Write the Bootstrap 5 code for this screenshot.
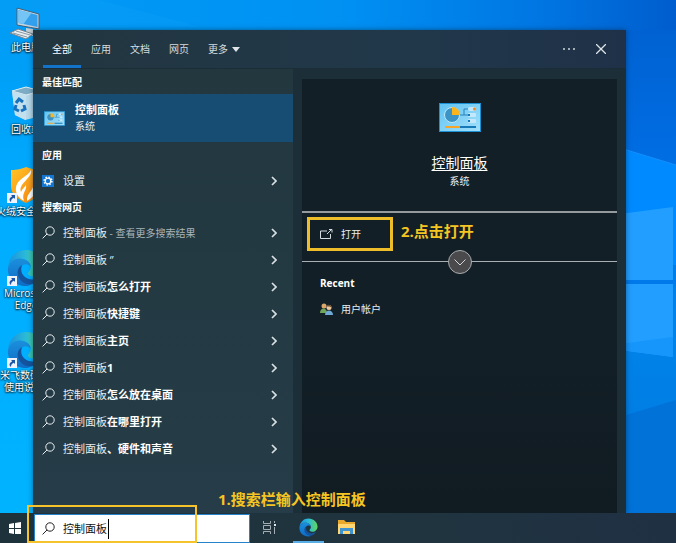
<!DOCTYPE html>
<html lang="zh-CN">
<head>
<meta charset="utf-8">
<meta name="viewport" content="width=device-width, initial-scale=1">
<title>控制面板</title>
<link href="https://cdn.jsdelivr.net/npm/bootstrap@5.3.0/dist/css/bootstrap.min.css" rel="stylesheet">
<style>
  body { font-family: "Open Sans", "Noto Sans CJK SC", sans-serif; font-size: 11px; line-height: 16px; background: #0091f2; color: #e8edf0; }
  button { font: inherit; color: inherit; background: none; border: 0; padding: 0; }
  svg { display: block; flex: none; }
  .fs-s { font-size: 10px; }
  .desk-list { width: 52px; padding-top: 3px; }
  .desk-item { height: 82px; color: #fff; font-size: 10px; line-height: 12px; text-decoration: none; text-shadow: 0 1px 2px #000, 0 0 2px #000; white-space: nowrap; }
  .desk-item svg { height: 38px; }
  .search-panel { left: 33px; right: 50px; top: 30px; bottom: 0; background: #1c2e38; box-shadow: 0 0 5px #0238; }
  .panel-head { height: 39px; background: linear-gradient(90deg, #22363f, #21384a 60%, #1f3148); border-bottom: 1px solid #1b2d36; padding-left: 10px; padding-right: 13px; }
  .tabs { gap: 1px; }
  .tab { padding: 0 9px; border-bottom: 3px solid transparent; border-top: 3px solid transparent; color: #d5dcdf; }
  .tab.active { border-bottom-color: #1273c8; color: #fff; }
  .head-btn { width: 24px; height: 24px; }
  .results { width: 260px; background: linear-gradient(#23373f, #233a43 50%, #263c48); }
  .group-label { font-size: 10px; font-weight: 700; height: 25px; padding-left: 9px; color: #fff; margin: 0; }
  .best { height: 48px; background: #184d73; padding-left: 11px; gap: 10px; }
  .best b, .hit b { color: #fff; }
  .hit { height: 27px; padding-left: 9px; padding-right: 16px; gap: 8px; }
  .hit small { font-size: 10px; color: #aab5ba; }
  .preview { margin: 10px 9px 0; background: linear-gradient(#121f27, #131f26 60%, #101b22); }
  .hero { padding-top: 24px; height: 132px; }
  .hero a { color: #fff; font-size: 14px; line-height: 20px; margin-top: 21px; text-underline-offset: 2px; }
  .actions { border-top: 2px solid #949a9e; border-bottom: 1px solid #a9afb2; height: 51px; padding: 4px 5px 0; gap: 8px; }
  .open-btn { width: 86px; height: 34px; border: 3px solid #eebd2a; padding-left: 10px; gap: 8px; }
  .note { color: #f5c522; font-size: 15px; line-height: 20px; font-weight: 700; }
  .expand { width: 24px; height: 24px; left: calc(50% - 12px); bottom: -13px; background: #4a4a4c; border: 1px solid #a8abad; border-radius: 50%; }
  .recent { padding: 13px 18px; gap: 10px; }
  .note-one { left: 218px; bottom: 4px; }
  .taskbar { height: 30px; background: linear-gradient(90deg, #1e323b, #20343f 60%, #1f3043); }
  .start-btn { width: 34px; padding-left: 9px; }
  .search-box { width: 216px; background: #fff; border: 1px solid #2583cc; margin-top: 1px; padding-left: 7px; gap: 8px; color: #222; }
  .search-box input { font-size: 11px; line-height: 16px; border: 0; outline: 0; padding: 0; color: #111; min-width: 0; }
  .text-caret { left: 73px; top: 4px; width: 1px; height: 20px; background: #000; }
  .task-btn { width: 38px; border-bottom: 2px solid transparent !important; }
  .task-btn.running { border-bottom-color: #5aaee8 !important; width: 31px; margin-left: 5px; margin-right: 3px; }
  .frame-one { left: 27px; top: -8px; width: 170px; height: 38px; border: 2px solid #f5c42c; pointer-events: none; }
</style>
<script src="https://cdn.jsdelivr.net/npm/bootstrap@5.3.0/dist/js/bootstrap.bundle.min.js"></script>
</head>
<body class="vh-100 d-flex flex-column overflow-hidden">

<svg width="0" height="0" class="position-absolute" aria-hidden="true">
  <defs>
    <linearGradient id="eg1" x1="0" y1="0" x2="1" y2="0"><stop offset="0" stop-color="#1b8fdc"/><stop offset=".5" stop-color="#2bbbd8"/><stop offset="1" stop-color="#62d95a"/></linearGradient>
    <linearGradient id="eg2" x1="0" y1="0" x2="0" y2="1"><stop offset="0" stop-color="#1b8fdc"/><stop offset="1" stop-color="#0f6cc4"/></linearGradient>
    <linearGradient id="cp" x1="0" y1="0" x2="1" y2="1"><stop offset="0" stop-color="#5ec3f2"/><stop offset="1" stop-color="#a4e0fb"/></linearGradient>
    <linearGradient id="shield" x1="0" y1="0" x2="1" y2="1"><stop offset="0" stop-color="#ffc629"/><stop offset="1" stop-color="#f57c0d"/></linearGradient>
    <symbol id="edge" viewBox="0 0 40 40">
      <path d="M1 20C2 8 10 1 20 1c11 0 19 8 19 17 0 7-5 11-11 11-4 0-6-2-6-3 0-2 3-3 3-7 0-5-5-9-12-9C7 10 3 14 1 20z" fill="url(#eg1)"/>
      <path d="M1 20C3 14 7 10 13 10c7 0 12 4 12 9-1-2-3-3-5-3-5 0-8 5-7 10 1 7 7 11 13 11-2 1-4 2-6 2C9 39 0 31 1 20z" fill="url(#eg2)"/>
      <path d="M16 17c-4 2-6 6-4 12 2 5 7 9 14 8 4-1 8-4 10-8-3 2-6 3-9 3-7 0-12-5-12-10 0-2 0-3 1-5z" fill="#14539d"/>
    </symbol>
    <symbol id="cpl" viewBox="0 0 42 29">
      <rect x=".5" y=".5" width="41" height="28" fill="url(#cp)" stroke="#1c91d6"/>
      <circle cx="13" cy="12" r="7.5" fill="#3b93c6" stroke="#bfe8fa"/>
      <path d="M13 12V4a8 8 0 0 1 8 8z" fill="#fbb41c"/>
      <path d="M21 12h4V6h4M25 12h4" fill="none" stroke="#2b82b7"/>
      <g fill="#c3e8fb"><rect x="29" y="4" width="8" height="4" rx="2"/><rect x="29" y="10" width="8" height="4" rx="1"/><rect x="29" y="16" width="8" height="4" rx="1"/></g>
      <g fill="#1679b8"><rect x="29" y="11" width="2" height="2"/><rect x="29" y="17" width="2" height="2"/><rect x="21" y="23" width="16" height="2"/></g>
      <circle cx="35.500" cy="6" r="1.5" fill="#f18a25"/><path d="M6 23h15v2H6z" fill="#f7a62b"/>
    </symbol>
    <symbol id="glass" viewBox="0 0 13 13"><g fill="none" stroke="currentColor"><circle cx="8" cy="5" r="4.200"/><path d="M5 8 .6 12.400"/></g></symbol>
    <symbol id="chev" viewBox="0 0 6 10"><path d="m1 1 4 4-4 4" fill="none" stroke="#d9e0e3" stroke-width="1.700"/></symbol>
    <symbol id="short" viewBox="0 0 10 10"><path d="M0 0h10v10H0z" fill="#eef2fb"/><path d="M4 2h4v4L6.800 4.800C5 5.500 4 7 4 9 1.500 7 2.500 4.800 5.200 3.200z" fill="#1c55a8"/></symbol>
  </defs>
</svg>

<main class="position-relative flex-fill overflow-hidden">
  <svg class="position-absolute w-100 h-100" viewBox="0 0 676 513" preserveAspectRatio="none" aria-hidden="true">
    <defs>
      <linearGradient id="sky" x1="0" y1="0" x2="1" y2="0"><stop offset="0" stop-color="#009cf5"/><stop offset=".5" stop-color="#0091f3"/><stop offset=".8" stop-color="#0076e3"/><stop offset="1" stop-color="#005dcd"/></linearGradient>
      <linearGradient id="lft" x1="0" y1="0" x2="0" y2="1"><stop offset="0" stop-color="#009cf5"/><stop offset=".4" stop-color="#00adff"/><stop offset="1" stop-color="#00b3ff"/></linearGradient>
      <linearGradient id="rgt" x1="0" y1="0" x2="0" y2="1"><stop offset="0" stop-color="#0062d2"/><stop offset=".28" stop-color="#006ee4"/><stop offset=".6" stop-color="#0084ec"/><stop offset="1" stop-color="#0078dc"/></linearGradient>
    </defs>
    <path d="M0 0h676v513H0z" fill="url(#sky)"/>
    <path d="M0 30h34v483H0z" fill="url(#lft)"/>
    <path d="M100 0 200 27H0V0z" fill="#13a5fa" opacity=".2"/>
    <path d="M620 30h56v483h-56z" fill="url(#rgt)"/>
    <path d="m620 148 56 17v100h-56z" fill="#008aff"/>
    <path d="m620 148 56 17" stroke="#1390fb"/>
    <path d="m620 214 53-7v73h-53zM620 284h53v73l-53-7z" fill="#219eff"/>
    <path d="M620 280h56v4h-56z" fill="#0079eb"/>
    <path d="m620 344 53-7v20l-53-7z" fill="#1696fb"/>
    <path d="m620 417 56-17v113h-56z" fill="#0072d8"/>
  </svg>

  <nav class="desk-list position-absolute top-0 start-0 d-flex flex-column" aria-label="桌面">
    <a href="#" class="desk-item d-flex flex-column align-items-center">
      <svg width="34" viewBox="0 0 34 38"><path d="m8 5 22 6v15L8 22z" fill="#c6d6e1" stroke="#425f78"/><path d="m9.500 7 19 5v12l-19-4z" fill="#32a0ec"/><path d="m9.500 7 13 3-8 11-5-1z" fill="#74c4f6"/><path d="m17 25 7 1v3l5 2-5 2-10-3 3-1z" fill="#c5ced4"/><path d="m1 30 8-4 15 5-7 5z" fill="#e9eef1" stroke="#74838f"/><path d="m4 30 14 4M7 28l14 4" stroke="#8797a3"/></svg>
      <span>此电脑</span></a>
    <a href="#" class="desk-item d-flex flex-column align-items-center">
      <svg width="31" viewBox="0 0 31 38"><path d="m1 6 14-4 15 4-4 26-12 3-10-5z" fill="#b8d9e9"/><path d="m1 6 14-4 15 4-15 4z" fill="#7facc5" stroke="#dceef6"/><path d="m15 10v25L4 30 1 6z" fill="#c3e0ee"/><g fill="none" stroke="#1672bd" stroke-width="3"><path d="m5 18 3-4 4 3M13 20l1 4-4 2M8 26l-4-2 1-4"/></g></svg>
      <span>回收站</span></a>
    <a href="#" class="desk-item d-flex flex-column align-items-center">
      <svg width="38" viewBox="0 0 38 38"><path d="M4 3c7 0 10-1 15-3 5 2 10 3 15 3v16c0 8-6 13-15 17C10 32 4 27 4 19z" fill="url(#shield)"/><path d="M24 3c2 8-13 13-10 22 1-3 3-4 5-7 1 6-5 8-2 16-7-4-10-10-7-17 3-6 11-8 14-14zM28 12c4 9 2 16-8 22-1-8 8-11 8-22z" fill="#fff"/><use href="#short" y="26" width="10" height="10"/></svg>
      <span>火绒安全软件</span></a>
    <a href="#" class="desk-item d-flex flex-column align-items-center">
      <svg width="38" viewBox="0 0 38 38"><use href="#edge" width="38" height="38"/><use href="#short" y="27" width="10" height="10"/></svg>
      <span>Microsoft</span><span>Edge</span></a>
    <a href="#" class="desk-item d-flex flex-column align-items-center">
      <svg width="38" viewBox="0 0 38 38"><use href="#edge" width="38" height="38"/><use href="#short" y="27" width="10" height="10"/></svg>
      <span class="align-self-start">米飞数码</span><span class="align-self-start ps-1">使用说明</span></a>
  </nav>

  <section class="search-panel position-absolute d-flex flex-column">
    <header class="panel-head d-flex fs-s">
      <div class="tabs d-flex flex-fill">
        <button class="tab active">全部</button><button class="tab">应用</button><button class="tab">文档</button><button class="tab">网页</button>
        <button class="tab d-flex align-items-center gap-1">更多<svg width="8" height="5" viewBox="0 0 8 5"><path d="M0 0h8L4 5z" fill="#dfe5e8"/></svg></button>
      </div>
      <div class="d-flex align-items-center gap-2">
        <button class="head-btn d-flex align-items-center justify-content-center" aria-label="选项"><svg width="12" height="2"><path d="M0 0h2v2H0zM5 0h2v2H5zM10 0h2v2h-2z" fill="#a3adb5"/></svg></button>
        <button class="head-btn d-flex align-items-center justify-content-center" aria-label="关闭"><svg width="10" height="10"><path d="m0 0 10 10M10 0 0 10" stroke="#dde3e7" stroke-width="1.300"/></svg></button>
      </div>
    </header>

    <div class="d-flex flex-fill">
      <div class="results d-flex flex-column flex-shrink-0">
        <h2 class="group-label d-flex align-items-center">最佳匹配</h2>
        <button class="best d-flex align-items-center text-start"><svg width="21" height="15"><use href="#cpl"/></svg><span class="d-flex flex-column"><b>控制面板</b><span class="fs-s">系统</span></span></button>
        <h2 class="group-label d-flex align-items-center">应用</h2>
        <button class="hit d-flex align-items-center text-start"><svg width="13" height="12" viewBox="0 0 13 12"><path d="M0 0h12v12H0z" fill="#1376d2"/><circle cx="6" cy="6" r="3.900" fill="none" stroke="#fff" stroke-width="1.500" stroke-dasharray="1.500 1.560"/><circle cx="6" cy="6" r="2.800" fill="none" stroke="#fff" stroke-width="1.200"/></svg><span class="flex-fill">设置</span><svg width="6" height="10"><use href="#chev"/></svg></button>
        <h2 class="group-label d-flex align-items-center">搜索网页</h2>
        <button class="hit d-flex align-items-center text-start"><svg width="13" height="13"><use href="#glass"/></svg><span class="flex-fill">控制面板<small> - 查看更多搜索结果</small></span><svg width="6" height="10"><use href="#chev"/></svg></button>
        <button class="hit d-flex align-items-center text-start"><svg width="13" height="13"><use href="#glass"/></svg><span class="flex-fill">控制面板 ‘’</span><svg width="6" height="10"><use href="#chev"/></svg></button>
        <button class="hit d-flex align-items-center text-start"><svg width="13" height="13"><use href="#glass"/></svg><span class="flex-fill">控制面板<b>怎么打开</b></span><svg width="6" height="10"><use href="#chev"/></svg></button>
        <button class="hit d-flex align-items-center text-start"><svg width="13" height="13"><use href="#glass"/></svg><span class="flex-fill">控制面板<b>快捷键</b></span><svg width="6" height="10"><use href="#chev"/></svg></button>
        <button class="hit d-flex align-items-center text-start"><svg width="13" height="13"><use href="#glass"/></svg><span class="flex-fill">控制面板<b>主页</b></span><svg width="6" height="10"><use href="#chev"/></svg></button>
        <button class="hit d-flex align-items-center text-start"><svg width="13" height="13"><use href="#glass"/></svg><span class="flex-fill">控制面板<b>1</b></span><svg width="6" height="10"><use href="#chev"/></svg></button>
        <button class="hit d-flex align-items-center text-start"><svg width="13" height="13"><use href="#glass"/></svg><span class="flex-fill">控制面板<b>怎么放在桌面</b></span><svg width="6" height="10"><use href="#chev"/></svg></button>
        <button class="hit d-flex align-items-center text-start"><svg width="13" height="13"><use href="#glass"/></svg><span class="flex-fill">控制面板<b>在哪里打开</b></span><svg width="6" height="10"><use href="#chev"/></svg></button>
        <button class="hit d-flex align-items-center text-start"><svg width="13" height="13"><use href="#glass"/></svg><span class="flex-fill">控制面板<b>、硬件和声音</b></span><svg width="6" height="10"><use href="#chev"/></svg></button>
      </div>

      <div class="preview flex-fill">
        <div class="hero d-flex flex-column align-items-center">
          <svg width="42" height="29"><use href="#cpl"/></svg>
          <a href="#">控制面板</a>
          <span class="fs-s">系统</span>
        </div>
        <div class="actions position-relative d-flex align-items-start">
          <button class="open-btn d-flex align-items-center fs-s"><svg width="13" height="10" viewBox="0 0 13 10"><path d="M7 2H.5v7.500h10V5M7 5l4-4M9 .5h3v3" fill="none" stroke="#d5dbde"/></svg>打开</button>
          <span class="note pt-1">2.点击打开</span>
          <button class="expand position-absolute d-flex align-items-center justify-content-center" aria-label="展开"><svg width="12" height="7"><path d="m.5.5 5.500 5.500 5.500-5.500" fill="none" stroke="#d2d4d5"/></svg></button>
        </div>
        <div class="recent d-flex flex-column fs-s">
          <b class="text-white">Recent</b>
          <a href="#" class="d-flex align-items-center gap-2 text-reset text-decoration-none"><svg width="13" height="12"><circle cx="4" cy="3" r="2.500" fill="#dba66b"/><path d="M0 10c0-6 7-6 7 0z" fill="#71a65a"/><circle cx="9" cy="4.500" r="2.500" fill="#efc79c"/><path d="M6.500 3.500c1-3 5-2 5 1l-2-1z" fill="#6b4a2c"/><path d="M5 12c0-6 8-6 8 0z" fill="#6fa9d8"/></svg>用户帐户</a>
        </div>
      </div>
    </div>
  </section>

  <div class="note note-one position-absolute">1.搜索栏输入控制面板</div>
</main>

<footer class="taskbar position-relative d-flex flex-shrink-0">
  <button class="start-btn d-flex align-items-center" aria-label="开始"><svg width="12" height="12"><path d="m0 2 5-1v5H0zM6 1l6-1v6H6zM0 7h5v5l-5-1zM6 7h6v5H6z" fill="#fff"/></svg></button>
  <label class="search-box position-relative d-flex align-items-center"><svg width="13" height="13"><use href="#glass"/></svg><input class="flex-fill" type="text" value="控制面板" aria-label="搜索"><span class="text-caret position-absolute"></span></label>
  <button class="task-btn d-flex align-items-center justify-content-center" aria-label="任务视图"><svg width="13" height="13"><path d="M.5 0v2.500h7V0M.5 13v-2.500h7V13M.5 4.500h7v4h-7zM11.500 0v2M11.500 6v7" fill="none" stroke="#a3adb3"/><path d="M11 3h2v2h-2z" fill="#dfe4e7"/></svg></button>
  <button class="task-btn running d-flex align-items-center justify-content-center" aria-label="Edge"><svg width="19" height="19"><use href="#edge"/></svg></button>
  <button class="task-btn d-flex align-items-center justify-content-center" aria-label="文件资源管理器"><svg width="17" height="14"><path d="M0 0h6l2 2h9v12H0z" fill="#e9a92c"/><path d="M0 4h17v10H0z" fill="#ffd672"/><path d="M2 14V8h13v6h-3v-3H5v3z" fill="#3f93cf"/></svg></button>
  <div class="frame-one position-absolute"></div>
</footer>
</body>
</html>
